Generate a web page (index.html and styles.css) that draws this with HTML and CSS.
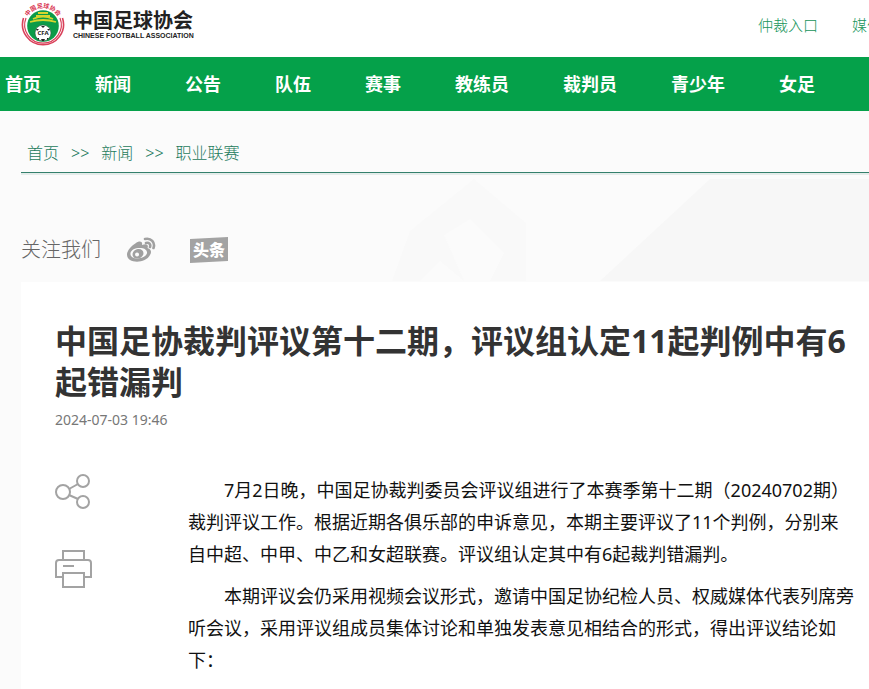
FILE: index.html
```html
<!DOCTYPE html>
<html lang="zh-CN">
<head>
  <meta charset="UTF-8">
  <meta name="viewport" content="width=device-width, initial-scale=1.0">
  <title>中国足球协会</title>
  <link rel="stylesheet" href="styles.css">
</head>
<body>
  <header class="header">
    <a class="logo" href="#">
      <svg class="logo-badge" viewBox="0 0 44 44" aria-hidden="true">
        <path id="ring" d="M5.500 26 A17 17 0 1 1 38.500 26" fill="none"/>
        <circle cx="22" cy="22" r="20.500" fill="#fff"/>
        <path d="M2.500 15 A20.500 20.500 0 1 0 41.500 15" fill="none" stroke="#d9415a" stroke-width="1.600"/>
        <path d="M5 15 A18.300 18.300 0 1 0 39 15" fill="none" stroke="#d9415a" stroke-width="1.200"/>
        <circle cx="22" cy="23" r="15.800" fill="#0b9b48"/>
        <text font-size="6" font-weight="700" fill="#d9344f"><textPath href="#ring" startOffset="50%" text-anchor="middle">中国足球协会</textPath></text>
        <path d="M17 10 H27 M15 13 H29 M12 16 Q22 11 32 16 M9 19 Q22 15 35 19" fill="none" stroke="#d6d62e" stroke-width="1.800"/>
        <circle cx="22" cy="30" r="8" fill="#fff" stroke="#27543a" stroke-width=".6"/>
        <path d="M20 23 L22 25 L24 23 Z M15 26 L18 26 L16 28 Z M29 26 L26 26 L28 28 Z M16 35 L18 35 L18 37 Z M28 35 L26 35 L26 37 Z M20 36 L24 36 L23 38 H21 Z" fill="#222"/>
        <text x="22" y="32" font-size="6" font-weight="700" text-anchor="middle" fill="#222">CFA</text>
      </svg>
      <span class="logo-text">
        <span class="logo-cn">中国足球协会</span>
        <span class="logo-en">CHINESE FOOTBALL ASSOCIATION</span>
      </span>
    </a>
    <div class="header-links">
      <a href="#">仲裁入口</a>
      <a href="#">媒体入口</a>
    </div>
  </header>

  <nav class="nav">
    <a href="#">首页</a>
    <a href="#">新闻</a>
    <a href="#">公告</a>
    <a href="#">队伍</a>
    <a href="#">赛事</a>
    <a href="#">教练员</a>
    <a href="#">裁判员</a>
    <a href="#">青少年</a>
    <a href="#">女足</a>
  </nav>

  <main class="main">
    <svg class="backdrop" viewBox="0 0 489 170" aria-hidden="true">
      <path d="M220 170 L330 68 H489 V170 Z" fill="#f7f7f7"/>
      <path d="M12 170 L30 120 L94 68 L146 112 V170 H84 L60 150 L40 170 Z" fill="#f9f9f9"/>
      <path d="M64 124 L90 108 L124 142 L110 170 H84 Z" fill="#fbfbfb"/>
    </svg>

    <div class="breadcrumb">
      <a href="#">首页</a>
      <span>&gt;&gt;</span>
      <a href="#">新闻</a>
      <span>&gt;&gt;</span>
      <a href="#">职业联赛</a>
    </div>

    <div class="follow">
      <span>关注我们</span>
      <a class="weibo" href="#" aria-label="微博">
        <svg width="30" height="28" viewBox="0 0 30 28">
          <path fill="#a0a0a0" fill-rule="evenodd" d="M10 7 C13 4.500 17 5 16 9 C20 7.500 23 8.500 21.500 12 C25 13 26 16 24 19 C19.500 28 1 28 1 18.500 C1 15 5 10 10 7 Z M12 12 C7 12.500 4 15.500 4.500 18.500 C5 21.500 9 23 13 22.300 C18 21.500 21.500 19 21 16 C20.500 13 17 11.500 12 12 Z"/>
          <path fill="#a0a0a0" fill-rule="evenodd" d="M12 13 C8 13.500 5.800 17 6.800 20 C8 23 12.500 23.500 15.500 21 C19.500 17.500 17 12.500 12 13 Z M11 16.500 A2 2 0 1 0 11.100 20.500 A2 2 0 1 0 11 16.500 Z"/>
          <path fill="none" stroke="#a0a0a0" stroke-width="2.600" stroke-linecap="round" d="M19 3 C25 1.500 29.500 6.500 27.500 12 M20 7 C23 6 25 8.500 24 11"/>
        </svg>
      </a>
      <a class="toutiao" href="#" aria-label="头条">
        <svg width="38" height="26" viewBox="0 0 38 26">
          <path fill="#a3a3a3" d="M0 2 L38 0 V24 L0 26 Z"/>
          <text x="19" y="19" font-size="16" font-weight="900" text-anchor="middle" fill="#fff">头条</text>
        </svg>
      </a>
    </div>

    <article class="article">
      <h1>中国足协裁判评议第十二期，评议组认定11起判例中有6起错漏判</h1>
      <time datetime="2024-07-03T19:46">2024-07-03 19:46</time>
      <div class="article-body">
        <div class="tools">
          <button type="button" aria-label="分享">
            <svg width="38" height="38" viewBox="0 0 38 38">
              <g fill="none" stroke="#a3a3a3" stroke-width="2">
                <circle cx="8" cy="18" r="7"/>
                <circle cx="28" cy="7" r="6"/>
                <circle cx="28" cy="28" r="6"/>
                <path d="M14 15 L23 10 M14 21 L23 25"/>
              </g>
            </svg>
          </button>
          <button type="button" aria-label="打印">
            <svg width="38" height="38" viewBox="0 0 38 38">
              <g fill="none" stroke="#a3a3a3" stroke-width="2">
                <path d="M8 10 V1 H29 V10"/>
                <path d="M8 27 H1 V13 Q1 10 4 10 H33 Q36 10 36 13 V27 H29"/>
                <path d="M8 23 H29 V37 H8 Z"/>
                <path d="M8 16 H19"/>
              </g>
            </svg>
          </button>
        </div>
        <div class="text">
          <p>7月2日晚，中国足协裁判委员会评议组进行了本赛季第十二期（20240702期）裁判评议工作。根据近期各俱乐部的申诉意见，本期主要评议了11个判例，分别来自中超、中甲、中乙和女超联赛。评议组认定其中有6起裁判错漏判。</p>
          <p>本期评议会仍采用视频会议形式，邀请中国足协纪检人员、权威媒体代表列席旁听会议，采用评议组成员集体讨论和单独发表意见相结合的形式，得出评议结论如下：</p>
        </div>
      </div>
    </article>
  </main>
</body>
</html>
```

FILE: styles.css
```css
* {
  box-sizing: border-box;
}
body {
  margin: 0;
  font-family: 'Noto Sans', 'Noto Sans CJK SC', sans-serif;
  background: #fbfbfb;
  color: #111;
  overflow-x: hidden;
}
a {
  color: inherit;
  text-decoration: none;
}
.header {
  display: flex;
  justify-content: space-between;
  height: 57px;
  padding-left: 21px;
  background: #fff;
}
.logo {
  display: flex;
  gap: 8px;
  padding-top: 3px;
}
.logo-badge {
  width: 44px;
  height: 44px;
}
.logo-text {
  display: flex;
  flex-direction: column;
  padding-top: 6px;
  color: #222;
}
.logo-cn {
  font-size: 20px;
  font-weight: 700;
  line-height: 23px;
}
.logo-en {
  font-family: 'Liberation Sans', sans-serif;
  font-size: 7px;
  font-weight: 700;
  line-height: 8px;
  white-space: nowrap;
}
.header-links {
  display: flex;
  gap: 34px;
  width: 111px;
  padding-top: 13px;
  font-size: 15px;
  font-weight: 300;
  line-height: 24px;
  color: #16945a;
  white-space: nowrap;
}
.nav {
  display: flex;
  gap: 54px;
  padding: 0 5px;
  background: #05a14a;
  color: #fff;
  font-size: 18px;
  font-weight: 700;
  line-height: 54px;
  white-space: nowrap;
}
.main {
  position: relative;
  padding: 28px 0 0 21px;
}
.backdrop {
  position: absolute;
  top: 0;
  right: 0;
  width: 489px;
  height: 170px;
}
.breadcrumb {
  position: relative;
  display: flex;
  gap: 12px;
  height: 34px;
  padding-left: 6px;
  border-bottom: 1px solid #34806c;
  box-shadow: 0 2px 0 #e4ecea;
  color: #1b7a5b;
  font-size: 16px;
  font-weight: 300;
  line-height: 28px;
}
.follow {
  position: relative;
  display: flex;
  align-items: center;
  padding: 62px 0 17px;
  color: #666;
  font-size: 20px;
  font-weight: 300;
  line-height: 30px;
}
.follow svg,
.tools svg {
  display: block;
}
.weibo {
  margin-left: 25px;
}
.toutiao {
  margin-left: 34px;
}
.article {
  position: relative;
  padding: 38px 14px 20px 34px;
  background: #fff;
}
.article h1 {
  margin: 0;
  color: #333;
  font-size: 32px;
  font-weight: 700;
  line-height: 41px;
}
.article time {
  display: block;
  margin-top: 8px;
  color: #777;
  font-size: 14px;
  line-height: 20px;
}
.article-body {
  display: flex;
  gap: 95px;
  margin-top: 44px;
}
.tools {
  display: flex;
  flex-direction: column;
  gap: 38px;
}
.tools button {
  padding: 0;
  border: 0;
  background: none;
  cursor: pointer;
}
.text {
  flex: 1;
}
.text p {
  margin: 0 0 10px;
  font-size: 18px;
  line-height: 32px;
  text-indent: 36px;
}
```
